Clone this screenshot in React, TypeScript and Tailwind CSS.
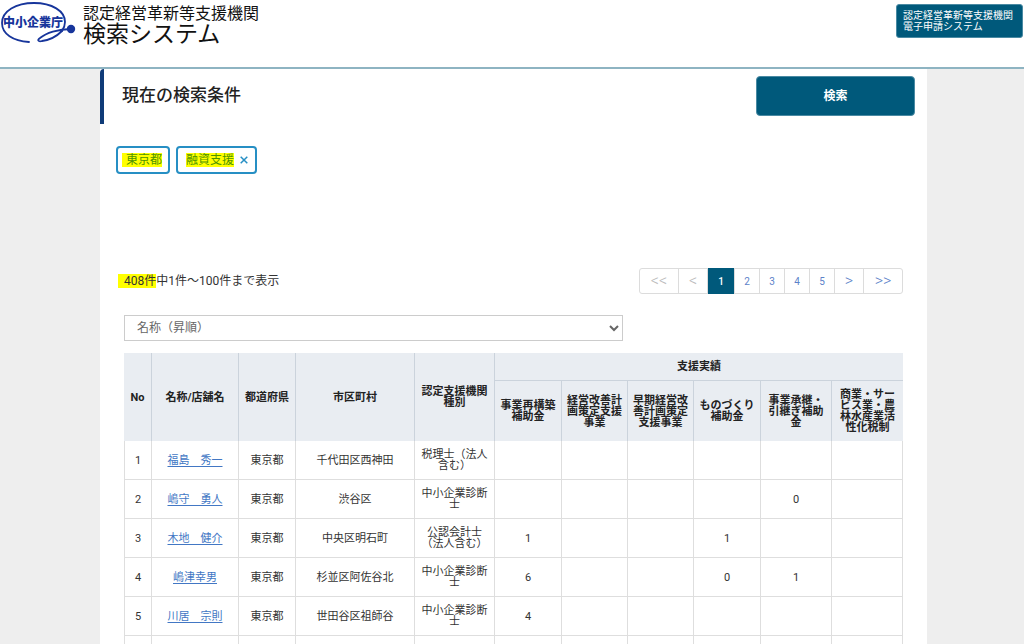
import { useState } from 'react'

const supportColumns = [
  '事業再構築補助金',
  '経営改善計画策定支援事業',
  '早期経営改善計画策定支援事業',
  'ものづくり補助金',
  '事業承継・引継ぎ補助金',
  '商業・サービス業・農林水産業活性化税制',
]

const agencies = [
  { name: '福島　秀一', city: '千代田区西神田', type: '税理士（法人含む）', results: ['', '', '', '', '', ''] },
  { name: '嶋守　勇人', city: '渋谷区', type: '中小企業診断士', results: ['', '', '', '', '0', ''] },
  { name: '木地　健介', city: '中央区明石町', type: '公認会計士（法人含む）', results: ['1', '', '', '1', '', ''] },
  { name: '嶋津幸男', city: '杉並区阿佐谷北', type: '中小企業診断士', results: ['6', '', '', '0', '1', ''] },
  { name: '川居　宗則', city: '世田谷区祖師谷', type: '中小企業診断士', results: ['4', '', '', '', '', ''] },
]

const pages = [
  { label: '<<', width: 'w-[39px]', disabled: true },
  { label: '<', width: 'w-[29px]', disabled: true },
  { label: '1', width: 'w-[27px]' },
  { label: '2', width: 'w-[25px]' },
  { label: '3', width: 'w-[25px]' },
  { label: '4', width: 'w-[25px]' },
  { label: '5', width: 'w-[25px]' },
  { label: '>', width: 'w-[29px]' },
  { label: '>>', width: 'w-[38px]' },
]

function Logo() {
  return (
    <svg width="78" height="46" viewBox="0 0 78 46" role="img" aria-label="中小企業庁">
      <g fill="none" stroke="#17359b" strokeLinecap="round">
        <path
          d="M29 42 C13 41 2 34 2 23 C2 11 16 3 34 3 C52 3 65 11 65 22 C65 25 64 28 62 31"
          strokeWidth="1.8"
        />
        <path
          d="M71 29 C58 29 46 33 40 38 C37 40 38 42 42 41 C50 40 57 36 62 31"
          strokeWidth="1.8"
        />
      </g>
      <circle cx="71" cy="29" r="4.2" fill="#17359b" />
      <text
        x="33"
        y="27"
        textAnchor="middle"
        fill="#17359b"
        className="font-['Noto_Sans_CJK_JP',sans-serif] text-[12px] font-black"
      >
        中小企業庁
      </text>
    </svg>
  )
}

function Header() {
  return (
    <header className="flex h-[69px] shrink-0 items-start justify-between border-b-2 border-[#8eb4c2] bg-white">
      <div className="flex">
        <Logo />
        <h1 className="ml-[5px] pt-[6px] font-normal text-[#111]">
          <span className="block text-[16px] leading-[16px]">認定経営革新等支援機関</span>
          <span className="block text-[23px] leading-[25px]">検索システム</span>
        </h1>
      </div>
      <a
        href="#apply"
        className="mt-1 mr-px w-[127px] rounded-[3px] border border-[#4a8aa3] bg-[#00597b] px-[6px] py-[5px] text-[10px] leading-[11px] text-white"
      >
        認定経営革新等支援機関
        <br />
        電子申請システム
      </a>
    </header>
  )
}

function Conditions() {
  const [support, setSupport] = useState(true)

  return (
    <section>
      <div className="flex h-[55px] justify-between rounded-tl border-l-4 border-[#0f3b78] pr-3 pl-[18px]">
        <h2 className="text-[17px] leading-[52px] font-medium text-[#222]">現在の検索条件</h2>
        <button
          type="button"
          className="mt-[7px] h-10 w-[159px] rounded border border-[#4a8aa3] bg-[#00597b] text-[12px] font-bold text-white"
        >
          検索
        </button>
      </div>
      <ul className="mt-[22px] flex h-7 gap-[6px] pl-4 text-[12px] leading-[14px]">
        <li className="flex items-center rounded border-2 border-[#268fc4] pr-[6px] pl-1">
          <mark className="bg-[#ffff00] pl-[4px] text-[#4e9400]">東京都</mark>
        </li>
        {support && (
          <li className="flex items-center rounded border-2 border-[#268fc4] pr-[6px] pl-2">
            <mark className="bg-[#ffff00] text-[#4e9400]">融資支援</mark>
            <button
              type="button"
              aria-label="融資支援を解除"
              onClick={() => setSupport(false)}
              className="ml-1 flex w-[11px] justify-center text-[#268fc4]"
            >
              <svg width="8" height="8" viewBox="0 0 8 8" stroke="currentColor" strokeWidth="1.5">
                <path d="M0.7 0.7 L7.3 7.3 M7.3 0.7 L0.7 7.3" />
              </svg>
            </button>
          </li>
        )}
      </ul>
    </section>
  )
}

function Pagination() {
  const [current, setCurrent] = useState('1')

  return (
    <nav
      aria-label="ページ"
      className="flex h-[26px] rounded-[3px] border border-[#dcdcdc] text-[10px] text-[#5c82c9]"
    >
      {pages.map((page) => (
        <button
          key={page.label}
          type="button"
          disabled={page.disabled}
          onClick={() => setCurrent(page.label)}
          className={`${page.width} border-r border-[#dcdcdc] last:border-r-0 ${
            page.label === current
              ? '-my-px bg-[#00597b] font-medium text-white'
              : page.disabled
                ? 'text-[#bbb]'
                : ''
          } ${/[<>]/.test(page.label) ? 'text-[16px] leading-[16px] font-light' : ''}`}
        >
          {page.label}
        </button>
      ))}
    </nav>
  )
}

function ResultTable() {
  const head = 'border-l border-[#cbd3dc] first:border-l-0 px-1 font-bold'
  const cell = 'border-b border-l last:border-r border-[#dedede] px-1'

  return (
    <table className="mt-3 w-full table-fixed border-separate border-spacing-0 text-center text-[11px] leading-[11px] text-[#333]">
      <colgroup>
        <col className="w-[27px]" />
        <col className="w-[87px]" />
        <col className="w-[57px]" />
        <col className="w-[119px]" />
        <col className="w-[80px]" />
        <col className="w-[67px]" />
        <col className="w-[66px]" />
        <col className="w-[66px]" />
        <col className="w-[67px]" />
        <col className="w-[71px]" />
        <col className="w-[72px]" />
      </colgroup>
      <thead className="bg-[#e9edf2] text-[#222]">
        <tr className="h-[27px]">
          <th rowSpan={2} className={head}>No</th>
          <th rowSpan={2} className={head}>名称/店舗名</th>
          <th rowSpan={2} className={head}>都道府県</th>
          <th rowSpan={2} className={head}>市区町村</th>
          <th rowSpan={2} className={head}>認定支援機関種別</th>
          <th colSpan={6} className={head}>支援実績</th>
        </tr>
        <tr className="h-[61px]">
          {supportColumns.map((label) => (
            <th key={label} className="border-t border-l border-[#cbd3dc] px-1 font-bold">
              {label}
            </th>
          ))}
        </tr>
      </thead>
      <tbody>
        {agencies.map((agency, i) => (
          <tr key={agency.name} className="h-[39px]">
            <td className={cell}>{i + 1}</td>
            <td className={cell}>
              <a href={`#agency-${i + 1}`} className="text-[#4277c4] underline underline-offset-2">
                {agency.name}
              </a>
            </td>
            <td className={cell}>東京都</td>
            <td className={cell}>{agency.city}</td>
            <td className={cell}>{agency.type}</td>
            {agency.results.map((count, n) => (
              <td key={supportColumns[n]} className={cell}>
                {count}
              </td>
            ))}
          </tr>
        ))}
        <tr className="h-[39px]">
          {Array.from({ length: 11 }, (_, n) => (
            <td key={n} className={cell} />
          ))}
        </tr>
      </tbody>
    </table>
  )
}

function App() {
  return (
    <div className="flex h-screen flex-col overflow-hidden bg-[#eee] font-['Roboto','Noto_Sans_CJK_JP',sans-serif]">
      <Header />
      <main className="mr-[97px] ml-[100px] flex-1 bg-white">
        <Conditions />
        <section className="mt-[94px] pr-6 pl-6">
          <div className="flex items-center justify-between">
            <p className="text-[12px] leading-[14px] text-[#333]">
              <mark className="-ml-[6px] bg-[#ffff00] pl-[6px] text-[#333]">408件</mark>
              中1件～100件まで表示
            </p>
            <Pagination />
          </div>
          <select
            aria-label="並び順"
            className="mt-[21px] block h-[26px] w-[64%] border border-[#ccc] bg-white pl-2 text-[12px] text-[#666]"
          >
            <option>名称（昇順）</option>
            <option>名称（降順）</option>
          </select>
          <ResultTable />
        </section>
      </main>
    </div>
  )
}

export default App
